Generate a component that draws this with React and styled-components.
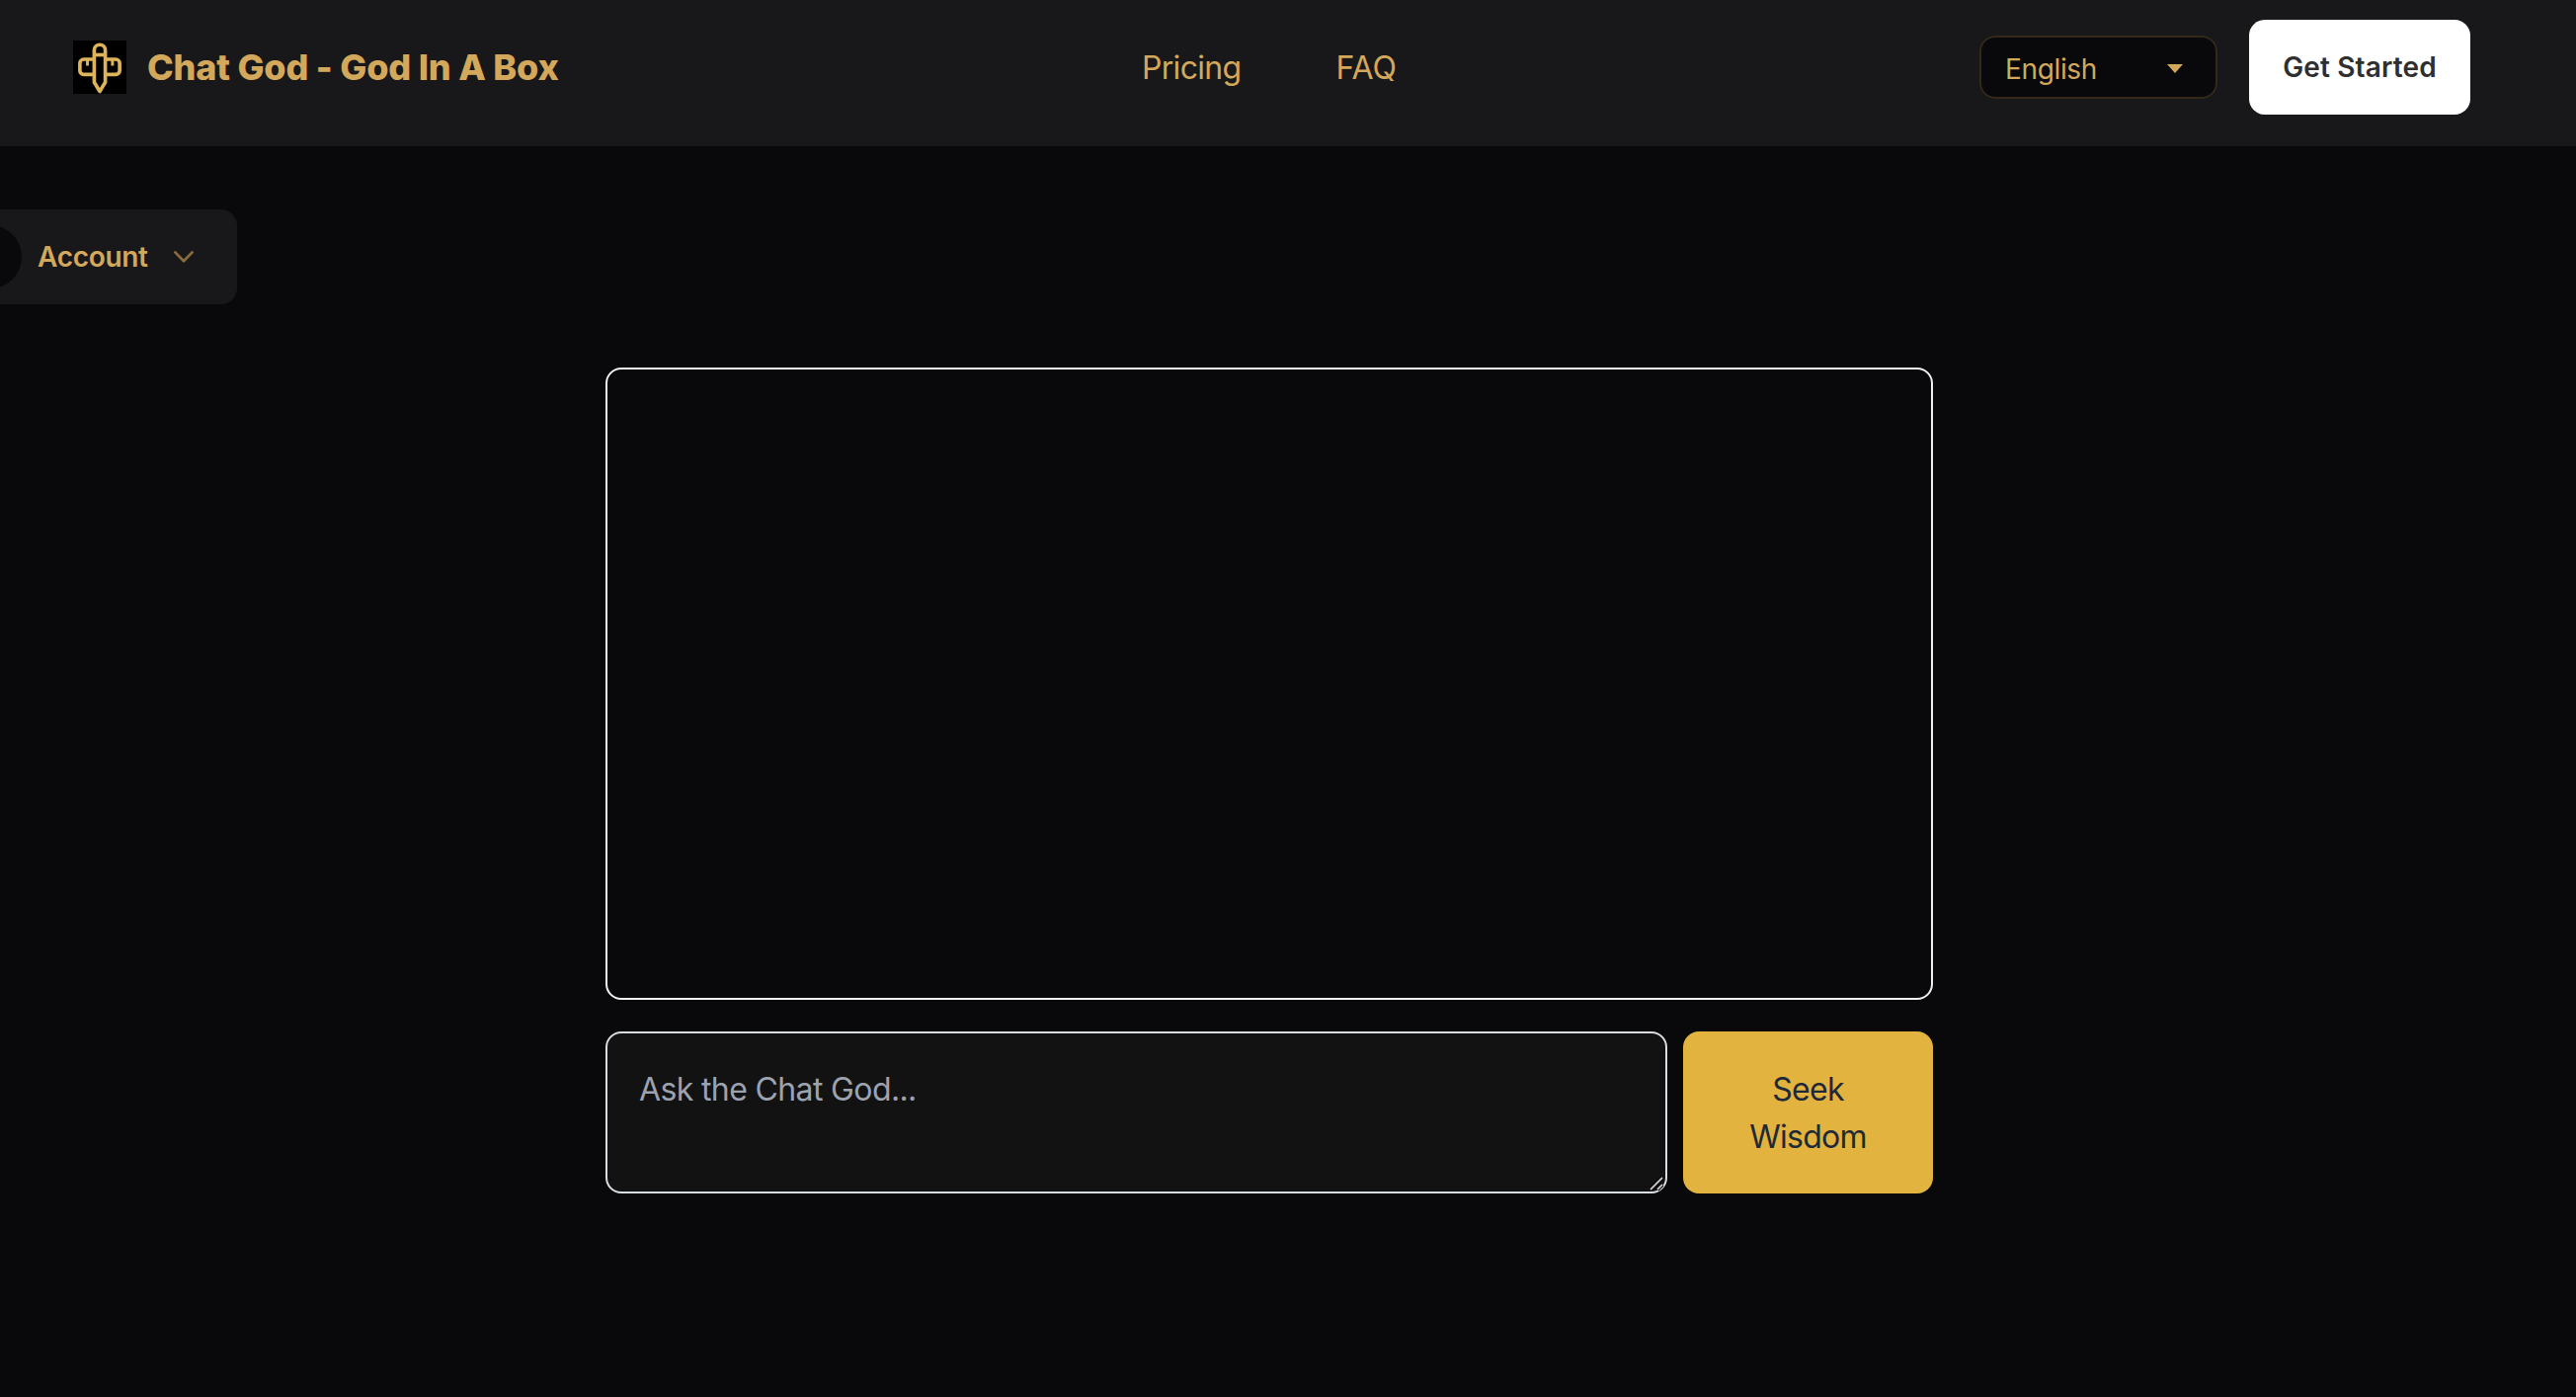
import React, { useState } from 'react'
import styled, { createGlobalStyle } from 'styled-components'

const colors = {
    page: '#09090b',
    surface: '#18181a',
    gold: '#d4a85a',
    button: '#e2b33e',
}

const GlobalStyle = createGlobalStyle`
    * {
        box-sizing: border-box;
    }
    body {
        margin: 0;
        background: ${colors.page};
        font-family: Inter, 'Liberation Sans', sans-serif;
        overflow: hidden;
    }
`

const Page = styled.div`
    min-height: 100vh;
    background: ${colors.page};
`

const NavBackground = styled.header`
    background: ${colors.surface};
`

const Nav = styled.nav`
    display: grid;
    grid-template-columns: 1082px auto 1fr;
    align-items: flex-start;
    width: 2570px;
    height: 148px;
    padding: 20px 69px 0 74px;
`

const Brand = styled.a`
    display: flex;
    align-items: center;
    height: 96px;
    gap: 21px;
`

const BrandName = styled.span`
    color: ${colors.gold};
    font-size: 36px;
    font-weight: 800;
    letter-spacing: -0.2px;
    white-space: nowrap;
`

const Links = styled.div`
    display: flex;
    align-items: center;
    height: 96px;
    padding-top: 2px;
    gap: 96px;
`

const NavLink = styled.a`
    color: ${colors.gold};
    font-size: 32px;
    line-height: 48px;
    letter-spacing: ${props => props.$spacing || '0'};
`

const Actions = styled.div`
    display: flex;
    align-items: center;
    justify-content: flex-end;
    height: 96px;
    gap: 32px;
`

const Language = styled.button`
    display: flex;
    align-items: center;
    justify-content: space-between;
    width: 241px;
    height: 64px;
    padding: 3px 33px 0 24px;
    border: 2px solid #33291b;
    border-radius: 16px;
    background: ${colors.page};
    color: ${colors.gold};
    font-family: inherit;
    font-size: 28px;
    letter-spacing: -0.35px;
`

const Caret = styled.span`
    border-left: 8px solid transparent;
    border-right: 8px solid transparent;
    border-top: 9px solid ${colors.gold};
`

const GetStarted = styled.button`
    width: 224px;
    height: 96px;
    padding: 0;
    border: none;
    border-radius: 16px;
    background: white;
    color: #2f2f31;
    font-family: inherit;
    font-size: 28px;
    font-weight: 600;
    letter-spacing: 0.15px;
`

const Account = styled.button`
    display: flex;
    align-items: center;
    width: 314px;
    height: 96px;
    margin: 64px 0 64px -74px;
    padding: 0 44px 0 32px;
    border: none;
    border-radius: 16px;
    background: ${colors.surface};
    color: ${colors.gold};
    font-family: inherit;
    font-size: 28px;
    font-weight: 600;
`

const Avatar = styled.span`
    flex: none;
    width: 64px;
    height: 64px;
    margin-right: 16px;
    border-radius: 50%;
    background: ${colors.page};
`

const AccountLabel = styled.span`
    flex: 1;
    text-align: left;
    letter-spacing: -0.3px;
`

const Chat = styled.main`
    display: flex;
    flex-direction: column;
    gap: 32px;
    width: 1344px;
    margin-left: 613px;
`

const Messages = styled.div`
    height: 640px;
    border: 2px solid #f0f0f0;
    border-radius: 16px;
`

const Form = styled.form`
    display: flex;
    gap: 16px;
    height: 164px;
`

const QuestionBox = styled.div`
    position: relative;
    width: 1075px;
    height: 164px;
`

const Question = styled.textarea`
    width: 100%;
    height: 100%;
    padding: 33px 32px 31px;
    border: 2px solid #dadddf;
    border-radius: 16px;
    outline: none;
    background: #121212;
    color: white;
    font-family: inherit;
    font-size: 32px;
    line-height: 48px;
    letter-spacing: -0.63px;
    resize: none;

    &::placeholder {
        color: #9ca3af;
        opacity: 1;
    }
`

const Grip = styled.svg`
    position: absolute;
    right: 2px;
    bottom: 2px;
`

const Seek = styled.button`
    flex: 1;
    padding: 2px 60px 0;
    border: none;
    border-radius: 16px;
    background: ${colors.button};
    color: #1f2937;
    font-family: inherit;
    font-size: 32px;
    line-height: 48px;
    letter-spacing: -0.75px;
`

const Logo = () => (
    <svg width="54" height="54" viewBox="0 0 55 55" fill="none" stroke="#deb45a" strokeWidth="3.7" strokeLinejoin="round">
        <rect width="55" height="55" fill="#000" stroke="none" />
        <path d="M21.8 35V10a5.7 5.7 0 0 1 11.4 0V43L27.5 52.5L21.8 43Z" />
        <path d="M21.8 14.8H33.2" />
        <path d="M21.8 19.4H11a4 4 0 0 0-4 4V31a4 4 0 0 0 4 4H21.8M33.2 19.4H44a4 4 0 0 1 4 4V31a4 4 0 0 1-4 4H33.2" />
        <path d="M14.8 20V26M40.6 20V26" strokeWidth="3" />
    </svg>
)

const App = () => {
    const [question, setQuestion] = useState('')

    return (
        <Page>
            <GlobalStyle />
            <NavBackground>
                <Nav>
                    <Brand>
                        <Logo />
                        <BrandName>Chat God - God In A Box</BrandName>
                    </Brand>
                    <Links>
                        <NavLink $spacing='-0.7px'>Pricing</NavLink>
                        <NavLink>FAQ</NavLink>
                    </Links>
                    <Actions>
                        <Language>
                            English
                            <Caret />
                        </Language>
                        <GetStarted>Get Started</GetStarted>
                    </Actions>
                </Nav>
            </NavBackground>
            <Account>
                <Avatar />
                <AccountLabel>Account</AccountLabel>
                <svg width="20" height="12" viewBox="0 0 20 12" fill="none" stroke="#886b3c" strokeWidth="2.8" strokeLinecap="round" strokeLinejoin="round">
                    <path d="M1.4 1.4L10 10.3L18.6 1.4" />
                </svg>
            </Account>
            <Chat>
                <Messages />
                <Form onSubmit={e => e.preventDefault()}>
                    <QuestionBox>
                        <Question
                            placeholder='Ask the Chat God...'
                            value={question}
                            onChange={e => setQuestion(e.target.value)}
                        />
                        <Grip width="16" height="16" viewBox="0 0 16 16" fill="none">
                            <path d="M1 14L13 2M8 14L13 9" stroke="#000" strokeWidth="4" />
                            <path d="M1 14L13 2M8 14L13 9" stroke="#c4c4c4" strokeWidth="1.8" />
                        </Grip>
                    </QuestionBox>
                    <Seek>Seek Wisdom</Seek>
                </Form>
            </Chat>
        </Page>
    )
}

export default App
